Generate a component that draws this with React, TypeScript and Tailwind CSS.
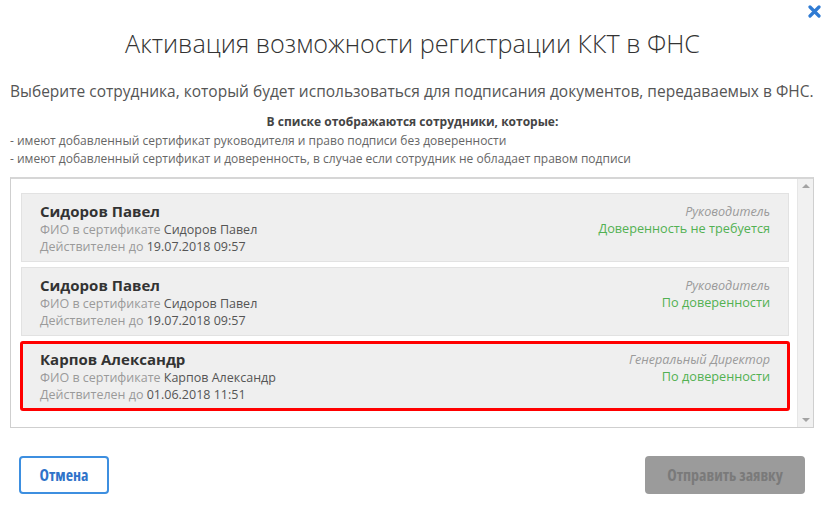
import React from "react";

const employees = [
  {
    name: "Сидоров Павел",
    certName: "Сидоров Павел",
    validTo: "19.07.2018 09:57",
    role: "Руководитель",
    status: "Доверенность не требуется",
    selected: false,
  },
  {
    name: "Сидоров Павел",
    certName: "Сидоров Павел",
    validTo: "19.07.2018 09:57",
    role: "Руководитель",
    status: "По доверенности",
    selected: false,
  },
  {
    name: "Карпов Александр",
    certName: "Карпов Александр",
    validTo: "01.06.2018 11:51",
    role: "Генеральный Директор",
    status: "По доверенности",
    selected: true,
  },
];

function CloseIcon() {
  return (
    <svg width="13" height="13" viewBox="0 0 13 13" aria-hidden="true">
      <path d="M2 2 L11 11 M11 2 L2 11" stroke="#2f7bd3" strokeWidth="3.2" strokeLinecap="round" />
    </svg>
  );
}

export default function App() {
  return (
    <div className="w-[825px] h-[511px] bg-white relative font-['Open_Sans',sans-serif] text-[#333]">
      <button className="absolute right-[4px] top-[5px] p-0" aria-label="Закрыть">
        <CloseIcon />
      </button>

      <div className="flex flex-col px-[10px] pt-[27px]">
        <h1 className="text-center text-[25.2px] font-light leading-[32px] text-[#333]">
          Активация возможности регистрации ККТ в ФНС
        </h1>
        <p className="mt-[21px] text-[15.5px] leading-[22px] text-[#555] whitespace-nowrap">
          Выберите сотрудника, который будет использоваться для подписания документов, передаваемых в ФНС.
        </p>

        <div className="mt-[11px] text-[12px] leading-[18.5px] text-[#666]">
          <div className="text-center font-bold text-[#444]">В списке отображаются сотрудники, которые:</div>
          <div>- имеют добавленный сертификат руководителя и право подписи без доверенности</div>
          <div>- имеют добавленный сертификат и доверенность, в случае если сотрудник не обладает правом подписи</div>
        </div>

        <div className="mt-[8px] h-[251px] w-[804px] flex border border-[#cfcfcf] border-t-2 border-t-[#d6d6d6]">
          <div className="flex-1 flex flex-col gap-[5px] pl-[10px] pr-[8px] pt-[14px]">
            {employees.map((e, i) => (
              <div
                key={i}
                className={
                  e.selected
                    ? "h-[70px] flex justify-between bg-[#efefef] border-[3px] border-[#ff0000] rounded-[3px] pl-[17px] pr-[17px] pt-[6px] -mx-[1px]"
                    : "h-[69px] flex justify-between bg-[#efefef] border border-[#e2e2e2] pl-[18px] pr-[18px] pt-[8px]"
                }
              >
                <div className="flex flex-col">
                  <div className="text-[15px] leading-[19px] font-bold text-[#333]">{e.name}</div>
                  <div className="text-[12.5px] leading-[17px] text-[#9a9a9a]">
                    ФИО в сертификате <span className="text-[#555]">{e.certName}</span>
                  </div>
                  <div className="text-[12.5px] leading-[17px] text-[#9a9a9a]">
                    Действителен до <span className="text-[#555]">{e.validTo}</span>
                  </div>
                </div>
                <div className="flex flex-col items-end pt-[1px]">
                  <div className="text-[12.6px] leading-[17px] italic text-[#9a9a9a]">{e.role}</div>
                  <div className="text-[12.7px] leading-[17px] text-[#52b152]">{e.status}</div>
                </div>
              </div>
            ))}
          </div>
          <div className="w-[16px] bg-[#f1f1f1] border-l border-[#e6e6e6] flex flex-col justify-between items-center py-[5px]">
            <div className="w-0 h-0 border-l-[4px] border-r-[4px] border-b-[4px] border-l-transparent border-r-transparent border-b-[#a3a3a3]" />
            <div className="w-0 h-0 border-l-[4px] border-r-[4px] border-t-[4px] border-l-transparent border-r-transparent border-t-[#a3a3a3]" />
          </div>
        </div>

        <div className="mt-[28px] flex justify-between pl-[9px] pr-[10px]">
          <button className="w-[90px] h-[38px] border-2 border-[#3d8fe0] rounded-[4px] bg-white text-[16px] font-bold text-[#2f73c9] font-stretch-condensed">
            Отмена
          </button>
          <button className="w-[160px] h-[38px] rounded-[4px] bg-[#9b9b9b] text-[16px] font-bold text-[#7a7a7a] font-stretch-condensed">
            Отправить заявку
          </button>
        </div>
      </div>
    </div>
  );
}
